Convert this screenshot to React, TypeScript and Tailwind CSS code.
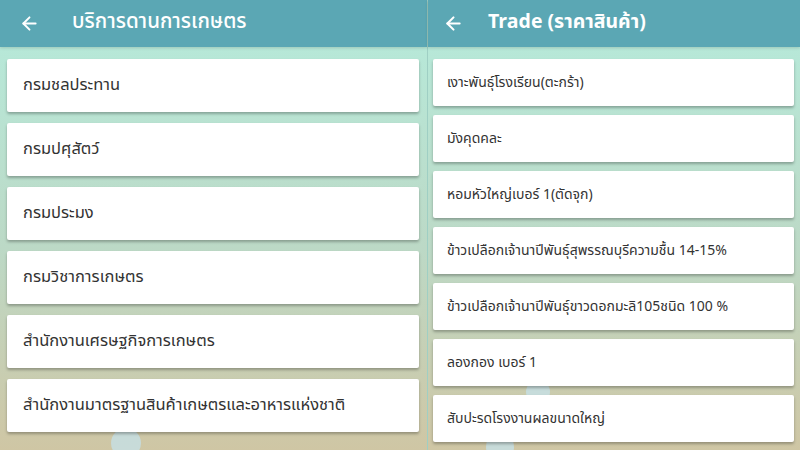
import React from "react";
import { ArrowLeft } from "lucide-react";

const FONT = {
  fontFamily:
    '"Noto Sans Thai", "Noto Sans Thai UI", "Kanit", "Prompt", "Noto Sans", "DejaVu Sans", sans-serif',
};

const left = [
  "กรมชลประทาน",
  "กรมปศุสัตว์",
  "กรมประมง",
  "กรมวิชาการเกษตร",
  "สำนักงานเศรษฐกิจการเกษตร",
  "สำนักงานมาตรฐานสินค้าเกษตรและอาหารแห่งชาติ",
];

const right = [
  "เงาะพันธุ์โรงเรียน(ตะกร้า)",
  "มังคุดคละ",
  "หอมหัวใหญ่เบอร์ 1(ตัดจุก)",
  "ข้าวเปลือกเจ้านาปีพันธุ์สุพรรณบุรีความชื้น 14-15%",
  "ข้าวเปลือกเจ้านาปีพันธุ์ขาวดอกมะลิ105ชนิด 100 %",
  "ลองกอง เบอร์ 1",
  "สับปะรดโรงงานผลขนาดใหญ่",
];

function Bubbles({ items }: { items: { x: number; y: number; r: number }[] }) {
  return (
    <>
      {items.map((b, i) => (
        <div
          key={i}
          className="absolute rounded-full bg-[#c6e0e6] opacity-80"
          style={{ left: b.x - b.r, top: b.y - b.r, width: b.r * 2, height: b.r * 2 }}
        />
      ))}
    </>
  );
}

export default function App() {
  return (
    <div className="flex w-[800px] h-[450px] overflow-hidden" style={FONT}>
      {/* Left screen */}
      <div className="w-[427px] h-full flex flex-col shrink-0">
        <div className="h-[47px] bg-[#5ba7b4] flex items-center shrink-0 shadow-[0_1px_3px_rgba(0,0,0,0.15)] z-10">
          <ArrowLeft className="ml-[19px] text-white" size={21} strokeWidth={2.2} />
          <span className="ml-[32px] text-white text-[20.5px] font-medium leading-none pb-[3px]">
            บริการดานการเกษตร
          </span>
        </div>
        <div className="relative flex-1 bg-gradient-to-b from-[#b7e8d8] via-[#bcd9c6] to-[#cfc6a4] pt-[12px] pl-[7px] pr-[8px] flex flex-col gap-[11px]">
          <Bubbles items={[{ x: 126, y: 396, r: 15 }]} />
          {left.map((t) => (
            <div
              key={t}
              className="relative h-[53px] bg-white rounded-[2px] shadow-[0_2px_3px_rgba(0,0,0,0.28)] flex items-center pl-[16px] text-[16.5px] text-[#333333]"
            >
              {t}
            </div>
          ))}
        </div>
      </div>
      <div className="w-px h-full bg-[#9fcfc4]" />
      {/* Right screen */}
      <div className="flex-1 h-full flex flex-col">
        <div className="h-[47px] bg-[#5ba7b4] flex items-center shrink-0 shadow-[0_1px_3px_rgba(0,0,0,0.15)] z-10">
          <ArrowLeft className="ml-[15px] text-white" size={21} strokeWidth={2.4} />
          <span className="ml-[24px] text-white text-[19.5px] font-bold leading-none pb-[2px]">
            Trade (ราคาสินค้า)
          </span>
        </div>
        <div className="relative flex-1 bg-gradient-to-b from-[#b7e8d8] via-[#bcd9c6] to-[#cfc6a4] pt-[12px] pl-[5px] pr-[6px] flex flex-col gap-[9px]">
          <Bubbles items={[{ x: 110, y: 345, r: 12 }, { x: 72, y: 400, r: 14 }]} />
          {right.map((t) => (
            <div
              key={t}
              className="relative h-[47px] bg-white rounded-[2px] shadow-[0_2px_3px_rgba(0,0,0,0.28)] flex items-center pl-[14px] text-[14px] text-[#333333]"
            >
              {t}
            </div>
          ))}
        </div>
      </div>
    </div>
  );
}
